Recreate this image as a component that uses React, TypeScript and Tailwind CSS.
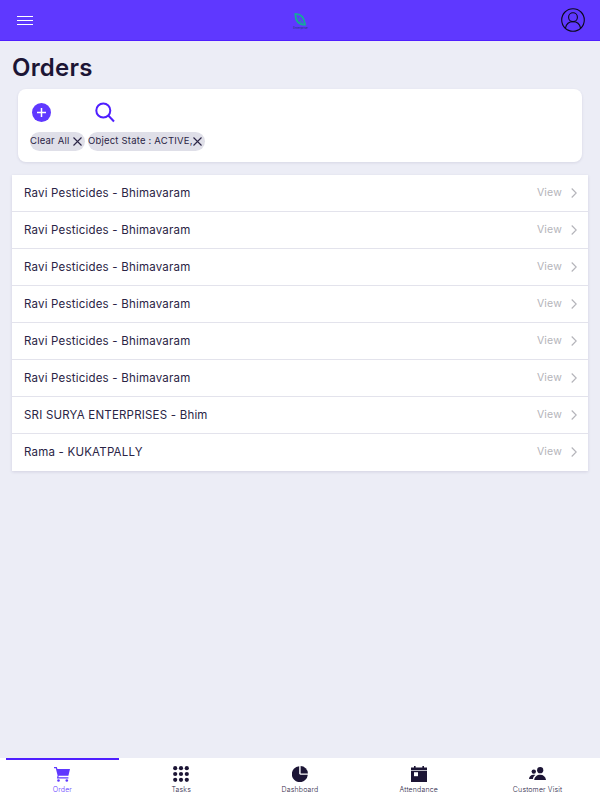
const rows = [
  "Ravi Pesticides - Bhimavaram",
  "Ravi Pesticides - Bhimavaram",
  "Ravi Pesticides - Bhimavaram",
  "Ravi Pesticides - Bhimavaram",
  "Ravi Pesticides - Bhimavaram",
  "Ravi Pesticides - Bhimavaram",
  "SRI SURYA ENTERPRISES - Bhim",
  "Rama - KUKATPALLY",
];

const X = () => (
  <svg width="9" height="9" viewBox="0 0 9 9" className="shrink-0" fill="none" stroke="#2a2445" strokeWidth="1.100">
    <path d="M0.500 0.500l8 8M8.500 0.500l-8 8" />
  </svg>
);

const Cart = () => (
  <svg width="16" height="15" viewBox="0 0 16 15" fill="#5f38ff">
    <path d="M0 0h2.800l.6 2H16l-1.600 6.800H4.700l-.3 1.400h10v1.200H2.900l.7-2.900L1.800 1.200H0z" />
    <circle cx="4.500" cy="13.500" r="1.300" />
    <circle cx="12.800" cy="13.500" r="1.300" />
  </svg>
);

const Dots = () => (
  <svg width="16" height="16" viewBox="0 0 16 16" fill="#1c1535">
    {[2.2, 8, 13.8].flatMap((y) =>
      [2.2, 8, 13.8].map((x) => <circle key={`${x}-${y}`} cx={x} cy={y} r="2.1" />)
    )}
  </svg>
);

const Pie = () => (
  <svg width="16" height="16" viewBox="0 0 16 16" fill="#1c1535">
    <path d="M7.200 0.200A8 8 0 1 0 15.800 8.800L8.400 8.800L7.200 8z" />
    <path d="M8.600 0.100A7.600 7.600 0 0 1 15.900 7.400H8.600z" />
  </svg>
);

const Calendar = () => (
  <svg width="16" height="16" viewBox="0 0 16 16" fill="#1c1535">
    <path d="M3 0h1.600v1.600h6.800V0H13v1.600h3V16H0V1.600h3z" />
    <rect x="0" y="4.100" width="16" height="0.700" fill="#ffffff" />
    <rect x="3" y="6.200" width="4" height="4" fill="#ffffff" />
  </svg>
);

const People = () => (
  <svg width="17" height="14" viewBox="0 0 17 14" fill="#1c1535">
    <circle cx="11.200" cy="3.200" r="3.100" />
    <circle cx="4.800" cy="4.600" r="2.200" />
    <path d="M5.200 13c.3-3.200 2.800-5.200 6-5.200s5.400 2 5.800 5.200z" />
    <path d="M0 12c.2-2.400 1.800-4.200 4.600-4.200.7 0 1.300.1 1.800.3C4.900 9 4.100 10.400 3.900 12z" />
  </svg>
);

const tabs = [
  { label: "Order", icon: <Cart />, active: true },
  { label: "Tasks", icon: <Dots /> },
  { label: "Dashboard", icon: <Pie /> },
  { label: "Attendance", icon: <Calendar /> },
  { label: "Customer Visit", icon: <People /> },
];

export default function App() {
  return (
    <div className="w-[600px] h-[800px] flex flex-col bg-[#ecedf6] text-[#1c1535] font-['Inter','Liberation_Sans',sans-serif] overflow-hidden">
      <header className="h-[41px] shrink-0 bg-[#5f38ff] border-b border-[#4f1fff] flex items-center justify-between pl-[17px] pr-[15px]">
        <svg width="16" height="9" viewBox="0 0 16 9" fill="none" stroke="#ffffff" strokeWidth="1.200">
          <path d="M0 0.500h16M0 4.500h16M0 8.500h16" />
        </svg>
        <div className="flex flex-col items-center mt-[3px] ml-[7px]">
          <svg width="13" height="13" viewBox="0 0 14 14" fill="none" stroke="#16a99a" strokeWidth="2">
            <path d="M1.500 1c6 0 9.500 3.500 10.500 11.500C5 12.500 1.500 8 1.500 1z" />
            <path d="M5 5l4 6" strokeWidth="1" />
          </svg>
          <span className="text-[3px] leading-[4px] text-[#1f3a70]">Enterprise</span>
        </div>
        <svg width="24" height="24" viewBox="0 0 24 24" fill="none" stroke="#0b0a1a" strokeWidth="1.100">
          <circle cx="12" cy="12" r="11.300" />
          <circle cx="12" cy="9.200" r="4.400" />
          <path d="M4.500 20c.8-4 3.700-6.400 7.500-6.400s6.700 2.400 7.500 6.400" />
        </svg>
      </header>

      <main className="flex-1 px-3 min-h-0">
        <h1 className="text-[24px] leading-[36px] font-semibold mt-[9px] tracking-[0.2px]">Orders</h1>
        <section className="mx-[6px] mt-[3px] h-[73px] bg-white rounded-[8px] shadow-[0_1px_3px_rgba(30,20,80,0.1)] pt-[13px] pl-[12px]">
          <div className="flex items-center h-[21px]">
            <div className="ml-[2px] w-[19px] h-[19px] rounded-full bg-[#5f38ff] flex items-center justify-center">
              <svg width="9" height="9" viewBox="0 0 9 9" stroke="#ffffff" strokeWidth="1.500">
                <path d="M4.500 0v9M0 4.500h9" />
              </svg>
            </div>
            <svg className="ml-[44px]" width="20" height="21" viewBox="0 0 20 21" fill="none" stroke="#4f1fff" strokeWidth="2">
              <circle cx="8.300" cy="8.500" r="7" />
              <path d="M13.300 13.500l5.700 6" />
            </svg>
          </div>
          <div className="flex gap-[3px] mt-[7px] pt-[2px]">
            <div className="h-[19px] w-[55px] rounded-full bg-[#dfdfe8] flex items-center justify-between pr-[3px]">
              <span className="text-[9.500px] tracking-[0.2px] whitespace-nowrap text-[#2a2445]">Clear All</span>
              <X />
            </div>
            <div className="h-[19px] w-[117px] rounded-full bg-[#dfdfe8] flex items-center justify-between pr-[3px]">
              <span className="text-[9.500px] tracking-[0.2px] whitespace-nowrap text-[#2a2445]">Object State : ACTIVE,</span>
              <X />
            </div>
          </div>
        </section>

        <ul className="mt-[13px] bg-white shadow-[0_1px_3px_rgba(30,20,80,0.12)]">
          {rows.map((r, i) => (
            <li
              key={i}
              className="h-[37px] flex items-center justify-between pl-3 pr-[11px] border-b border-[#e3e3ec] last:border-b-transparent"
            >
              <span className="text-[11.500px] tracking-[0.2px] pt-[2px] text-[#2a2445]">{r}</span>
              <span className="flex items-center gap-[9px] text-[#b4b4ba] text-[10.500px] tracking-[0.2px]">
                View
                <svg width="6" height="10" viewBox="0 0 6 10" fill="none" stroke="#b4b4ba" strokeWidth="1.100">
                  <path d="M0.700 0.500L5.200 5L0.700 9.500" />
                </svg>
              </span>
            </li>
          ))}
        </ul>
      </main>

      <nav className="relative h-[42px] shrink-0 bg-white grid grid-cols-5 px-[3px]">
        <div className="absolute left-[6px] top-0 w-[113px] h-[2px] bg-[#4f1fff]" />
        {tabs.map((t) => (
          <div key={t.label} className="flex flex-col items-center pt-[7px]">
            <div className="h-[18px] flex items-center justify-center">{t.icon}</div>
            <span className={`text-[7px] font-light leading-[10px] mt-[2px] tracking-[0.15px] ${t.active ? "text-[#5f38ff]" : "text-[#2a2445]"}`}>
              {t.label}
            </span>
          </div>
        ))}
      </nav>
    </div>
  );
}
